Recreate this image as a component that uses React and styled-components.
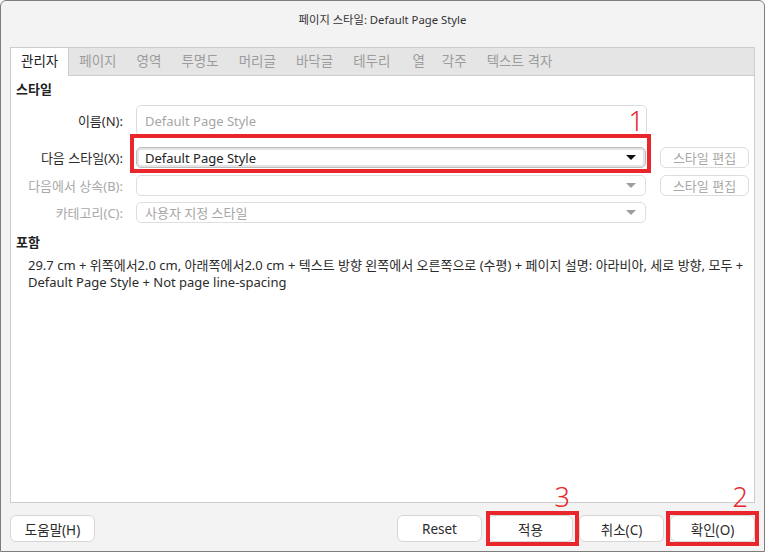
import React from "react";
import styled, { createGlobalStyle } from "styled-components";

const GlobalStyle = createGlobalStyle`
  html, body { margin: 0; padding: 0; background: #ffffff; }
  body { font-family: "Noto Sans", "Noto Sans CJK KR", sans-serif; }
`;

const Window = styled.div`
  width: 765px;
  height: 552px;
  box-sizing: border-box;
  border: 1px solid #7d7d7d;
  border-radius: 6px 6px 0 0;
  background: #f3f3f3;
  display: flex;
  flex-direction: column;
  padding: 0 9px;
  font-family: "Noto Sans", "Noto Sans CJK KR", sans-serif;
  color: #2b2b2b;
  overflow: hidden;
`;

const TitleBar = styled.div`
  height: 46px;
  box-sizing: border-box;
  padding-top: 10px;
  text-align: center;
  font-size: 11.3px;
  line-height: 17px;
  color: #333;
`;

const TabBar = styled.div`
  height: 29px;
  box-sizing: border-box;
  display: flex;
  background: #e5e5e5;
  border: 1px solid #cdcdcd;
`;

const Tab = styled.div`
  padding: 0 ${(p) => p.$pr || 10}px 0 ${(p) => p.$pl || 10}px;
  line-height: 27px;
  font-size: 13.5px;
  color: ${(p) => (p.$active ? "#222" : "#9c9c9c")};
  background: ${(p) => (p.$active ? "#fff" : "transparent")};
  border-right: ${(p) => (p.$active ? "1px solid #cdcdcd" : "none")};
  margin-bottom: ${(p) => (p.$active ? "-1px" : "0")};
`;

const Panel = styled.div`
  flex: 1;
  background: #fff;
  border: 1px solid #cdcdcd;
  border-top: none;
  padding: 5px 5px;
`;

const SectionTitle = styled.div`
  font-size: 13px;
  font-weight: 700;
  line-height: 17px;
  margin-top: ${(p) => p.$mt || 0}px;
  color: #222;
`;

const Row = styled.div`
  display: grid;
  grid-template-columns: 107px 511px 89px;
  column-gap: 13px;
  align-items: center;
  height: ${(p) => p.$h}px;
  margin-top: ${(p) => p.$mt}px;
`;

const Label = styled.div`
  text-align: right;
  font-size: 13px;
  white-space: nowrap;
  color: ${(p) => (p.$disabled ? "#a9a9a9" : "#2b2b2b")};
`;

const Entry = styled.div`
  height: 31px;
  box-sizing: border-box;
  border: 1px solid #dcdcdc;
  border-radius: 5px;
  padding-left: 8px;
  display: flex;
  align-items: center;
  font-size: 13px;
  color: #a6a6a6;
`;

const Combo = styled.div`
  height: 21px;
  width: 510px;
  box-sizing: border-box;
  border: 1px solid ${(p) => (p.$focus ? "#bdbdbd" : "#dedede")};
  box-shadow: ${(p) => (p.$focus ? "inset 0 0 0 2px #e4e4e4" : "none")};
  border-radius: 5px;
  padding: 0 9px 0 8px;
  display: flex;
  align-items: center;
  justify-content: space-between;
  font-size: 13px;
  color: ${(p) => (p.$disabled ? "#a6a6a6" : "#222")};
`;

const Arrow = styled.span`
  width: 0;
  height: 0;
  border-left: 5px solid transparent;
  border-right: 5px solid transparent;
  border-top: 5px solid ${(p) => (p.$disabled ? "#9d9d9d" : "#111")};
`;

const SmallButton = styled.div`
  height: 21px;
  box-sizing: border-box;
  border: 1px solid #dddddd;
  border-radius: 6px;
  display: flex;
  align-items: center;
  justify-content: center;
  font-size: 13px;
  color: #a9a9a9;
  background: #fff;
`;

const Mark = styled.div`
  position: relative;
`;

const Highlight = styled.span`
  position: absolute;
  top: ${(p) => p.$t}px;
  bottom: ${(p) => p.$b}px;
  left: ${(p) => p.$l}px;
  right: ${(p) => p.$r}px;
  border: 4px solid #e8262b;
  pointer-events: none;
`;

const Num = styled.span`
  position: absolute;
  right: ${(p) => p.$r}px;
  bottom: calc(100% + ${(p) => p.$gap}px);
  font-size: 27px;
  line-height: 1;
  color: #e8262b;
  font-weight: 300;
`;

const Description = styled.div`
  margin-top: 6px;
  padding-left: 12px;
  font-size: 13px;
  line-height: 17px;
  color: #2b2b2b;
`;

const Footer = styled.div`
  height: 48px;
  box-sizing: border-box;
  padding-top: 12px;
  display: flex;
  align-items: flex-start;
  gap: 6px;
`;

const Spacer = styled.div`
  flex: 1;
`;

const Button = styled.div`
  width: 85px;
  height: 27px;
  box-sizing: border-box;
  border: 1px solid #d6d6d6;
  border-radius: 6px;
  background: #fff;
  display: flex;
  align-items: center;
  justify-content: center;
  font-size: 13.5px;
  color: #2b2b2b;
`;

const tabs = ["관리자", "페이지", "영역", "투명도", "머리글", "바닥글", "테두리", "열", "각주", "텍스트 격자"];

export default function App() {
  return (
    <Window>
      <GlobalStyle />
      <TitleBar>페이지 스타일: Default Page Style</TitleBar>
      <TabBar>
        {tabs.map((t, i) => (
          <Tab key={t} $active={i === 0} $pl={t === "열" ? 12 : 10} $pr={t === "열" ? 7 : 10}>
            {t}
          </Tab>
        ))}
      </TabBar>
      <Panel>
        <SectionTitle>스타일</SectionTitle>

        <Row $h={31} $mt={7}>
          <Label>이름(N):</Label>
          <Entry>Default Page Style</Entry>
        </Row>

        <Row $h={21} $mt={11}>
          <Label>다음 스타일(X):</Label>
          <Mark>
            <Combo $focus>
              Default Page Style
              <Arrow />
            </Combo>
            <Highlight $t={-13} $b={-5} $l={-6} $r={-4}>
              <Num $r={3} $gap={4}>1</Num>
            </Highlight>
          </Mark>
          <SmallButton>스타일 편집</SmallButton>
        </Row>

        <Row $h={21} $mt={7}>
          <Label $disabled>다음에서 상속(B):</Label>
          <Combo $disabled>
            <span />
            <Arrow $disabled />
          </Combo>
          <SmallButton>스타일 편집</SmallButton>
        </Row>

        <Row $h={21} $mt={6}>
          <Label $disabled>카테고리(C):</Label>
          <Combo $disabled>
            사용자 지정 스타일
            <Arrow $disabled />
          </Combo>
        </Row>

        <SectionTitle $mt={11}>포함</SectionTitle>
        <Description>
          29.7 cm + 위쪽에서2.0 cm, 아래쪽에서2.0 cm + 텍스트 방향 왼쪽에서 오른쪽으로 (수평) + 페이지 설명: 아라비아, 세로 방향, 모두 +
          <br />
          Default Page Style + Not page line-spacing
        </Description>
      </Panel>
      <Footer>
        <Button>도움말(H)</Button>
        <Spacer />
        <Button>Reset</Button>
        <Mark>
          <Button>적용</Button>
          <Highlight $t={-4} $b={-4} $l={-2} $r={-6}>
            <Num $r={5} $gap={5}>3</Num>
          </Highlight>
        </Mark>
        <Button>취소(C)</Button>
        <Mark>
          <Button>확인(O)</Button>
          <Highlight $t={-4} $b={-4} $l={-4} $r={-4}>
            <Num $r={7} $gap={5}>2</Num>
          </Highlight>
        </Mark>
      </Footer>
    </Window>
  );
}
